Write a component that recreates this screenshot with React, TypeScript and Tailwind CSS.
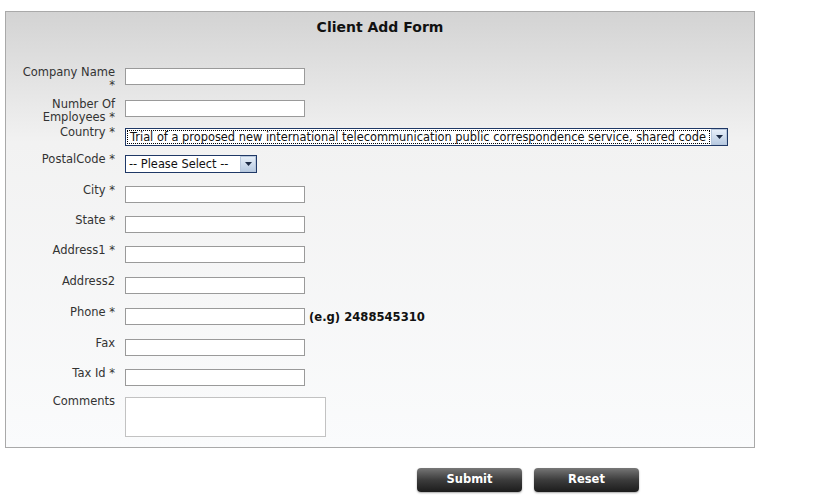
import React from "react";

const font = { fontFamily: "Verdana, 'DejaVu Sans', sans-serif" };

const Arrow = () => (
  <span className="flex h-[16px] w-[16px] items-center justify-center border border-[#b7c7dc] bg-gradient-to-b from-[#e6eef8] to-[#b9cbe2]">
    <svg width="7" height="4" viewBox="0 0 7 4">
      <path d="M0 0h7L3.5 4z" fill="#1b2a44" />
    </svg>
  </span>
);

const TextBox = () => <div className="mt-[2px] h-[17px] w-[180px] border border-[#9a9a9a] bg-white" />;

interface Row {
  label: React.ReactNode;
  rowClass: string;
  field: React.ReactNode;
}

const rows: Row[] = [
  { label: <>Company Name<br />*</>, rowClass: "h-[32px]", field: <TextBox /> },
  { label: <>Number Of<br />Employees *</>, rowClass: "h-[28px]", field: <TextBox /> },
  {
    label: "Country *",
    rowClass: "h-[27px]",
    field: (
      <div className="mt-[2px] flex h-[18px] w-[603px] items-center border border-[#1f3866] bg-white pl-[1px]">
        <span className="flex h-[14px] w-[583px] items-center whitespace-nowrap border border-dotted border-black px-[2px] text-[11.4px] leading-[12px] text-[#111]">
          Trial of a proposed new international telecommunication public correspondence service, shared code
        </span>
        <span className="ml-auto"><Arrow /></span>
      </div>
    ),
  },
  {
    label: "PostalCode *",
    rowClass: "h-[31px]",
    field: (
      <div className="mt-[2px] flex h-[18px] w-[132px] items-center border border-[#1f3866] bg-white pl-[3px]">
        <span className="whitespace-nowrap text-[11.4px] leading-[12px] text-[#111]">-- Please Select --</span>
        <span className="ml-auto"><Arrow /></span>
      </div>
    ),
  },
  { label: "City *", rowClass: "h-[30px]", field: <TextBox /> },
  { label: "State *", rowClass: "h-[30px]", field: <TextBox /> },
  { label: "Address1 *", rowClass: "h-[31px]", field: <TextBox /> },
  { label: "Address2", rowClass: "h-[31px]", field: <TextBox /> },
  {
    label: "Phone *",
    rowClass: "h-[31px]",
    field: (
      <div className="flex items-start">
        <TextBox />
        <span className="ml-[4px] mt-[4px] text-[11.6px] font-bold leading-[14px] text-[#111]">(e.g) 2488545310</span>
      </div>
    ),
  },
  { label: "Fax", rowClass: "h-[30px]", field: <TextBox /> },
  { label: "Tax Id *", rowClass: "h-[28px]", field: <TextBox /> },
  {
    label: "Comments",
    rowClass: "h-[44px]",
    field: <div className="mt-[2px] h-[40px] w-[201px] border border-[#c2c2c2] bg-white" />,
  },
];

const Button = ({ text }: { text: string }) => (
  <button className="flex h-[24px] w-[105px] items-center justify-center rounded-[4px] bg-gradient-to-b from-[#777] via-[#3c3c3c] to-[#1c1c1c] text-[11.5px] font-bold text-white shadow-[0_1px_2px_rgba(0,0,0,0.35)]">
    {text}
  </button>
);

export default function App() {
  return (
    <div className="h-[498px] w-[824px] bg-white pl-[5px] pt-[11px]" style={font}>
      <div className="h-[437px] w-[750px] border border-[#a9a9a9] bg-gradient-to-b from-[#d3d3d3] via-[#f2f2f2] via-30% to-[#fafbfc] pt-[5px]">
        <h1 className="text-center text-[14px] font-bold leading-[20px] text-[#111]">Client Add Form</h1>
        <div className="mt-[29px] flex flex-col">
          {rows.map((r, i) => (
            <div key={i} className={`flex items-start ${r.rowClass}`}>
              <div className="w-[110px] pr-[1px] text-right text-[11.5px] leading-[13px] text-[#333]">
                <div className="ml-auto w-[97px]">{r.label}</div>
              </div>
              <div className="ml-[9px]">{r.field}</div>
            </div>
          ))}
        </div>
      </div>
      <div className="mt-[20px] flex gap-[12px] pl-[412px]">
        <Button text="Submit" />
        <Button text="Reset" />
      </div>
    </div>
  );
}
